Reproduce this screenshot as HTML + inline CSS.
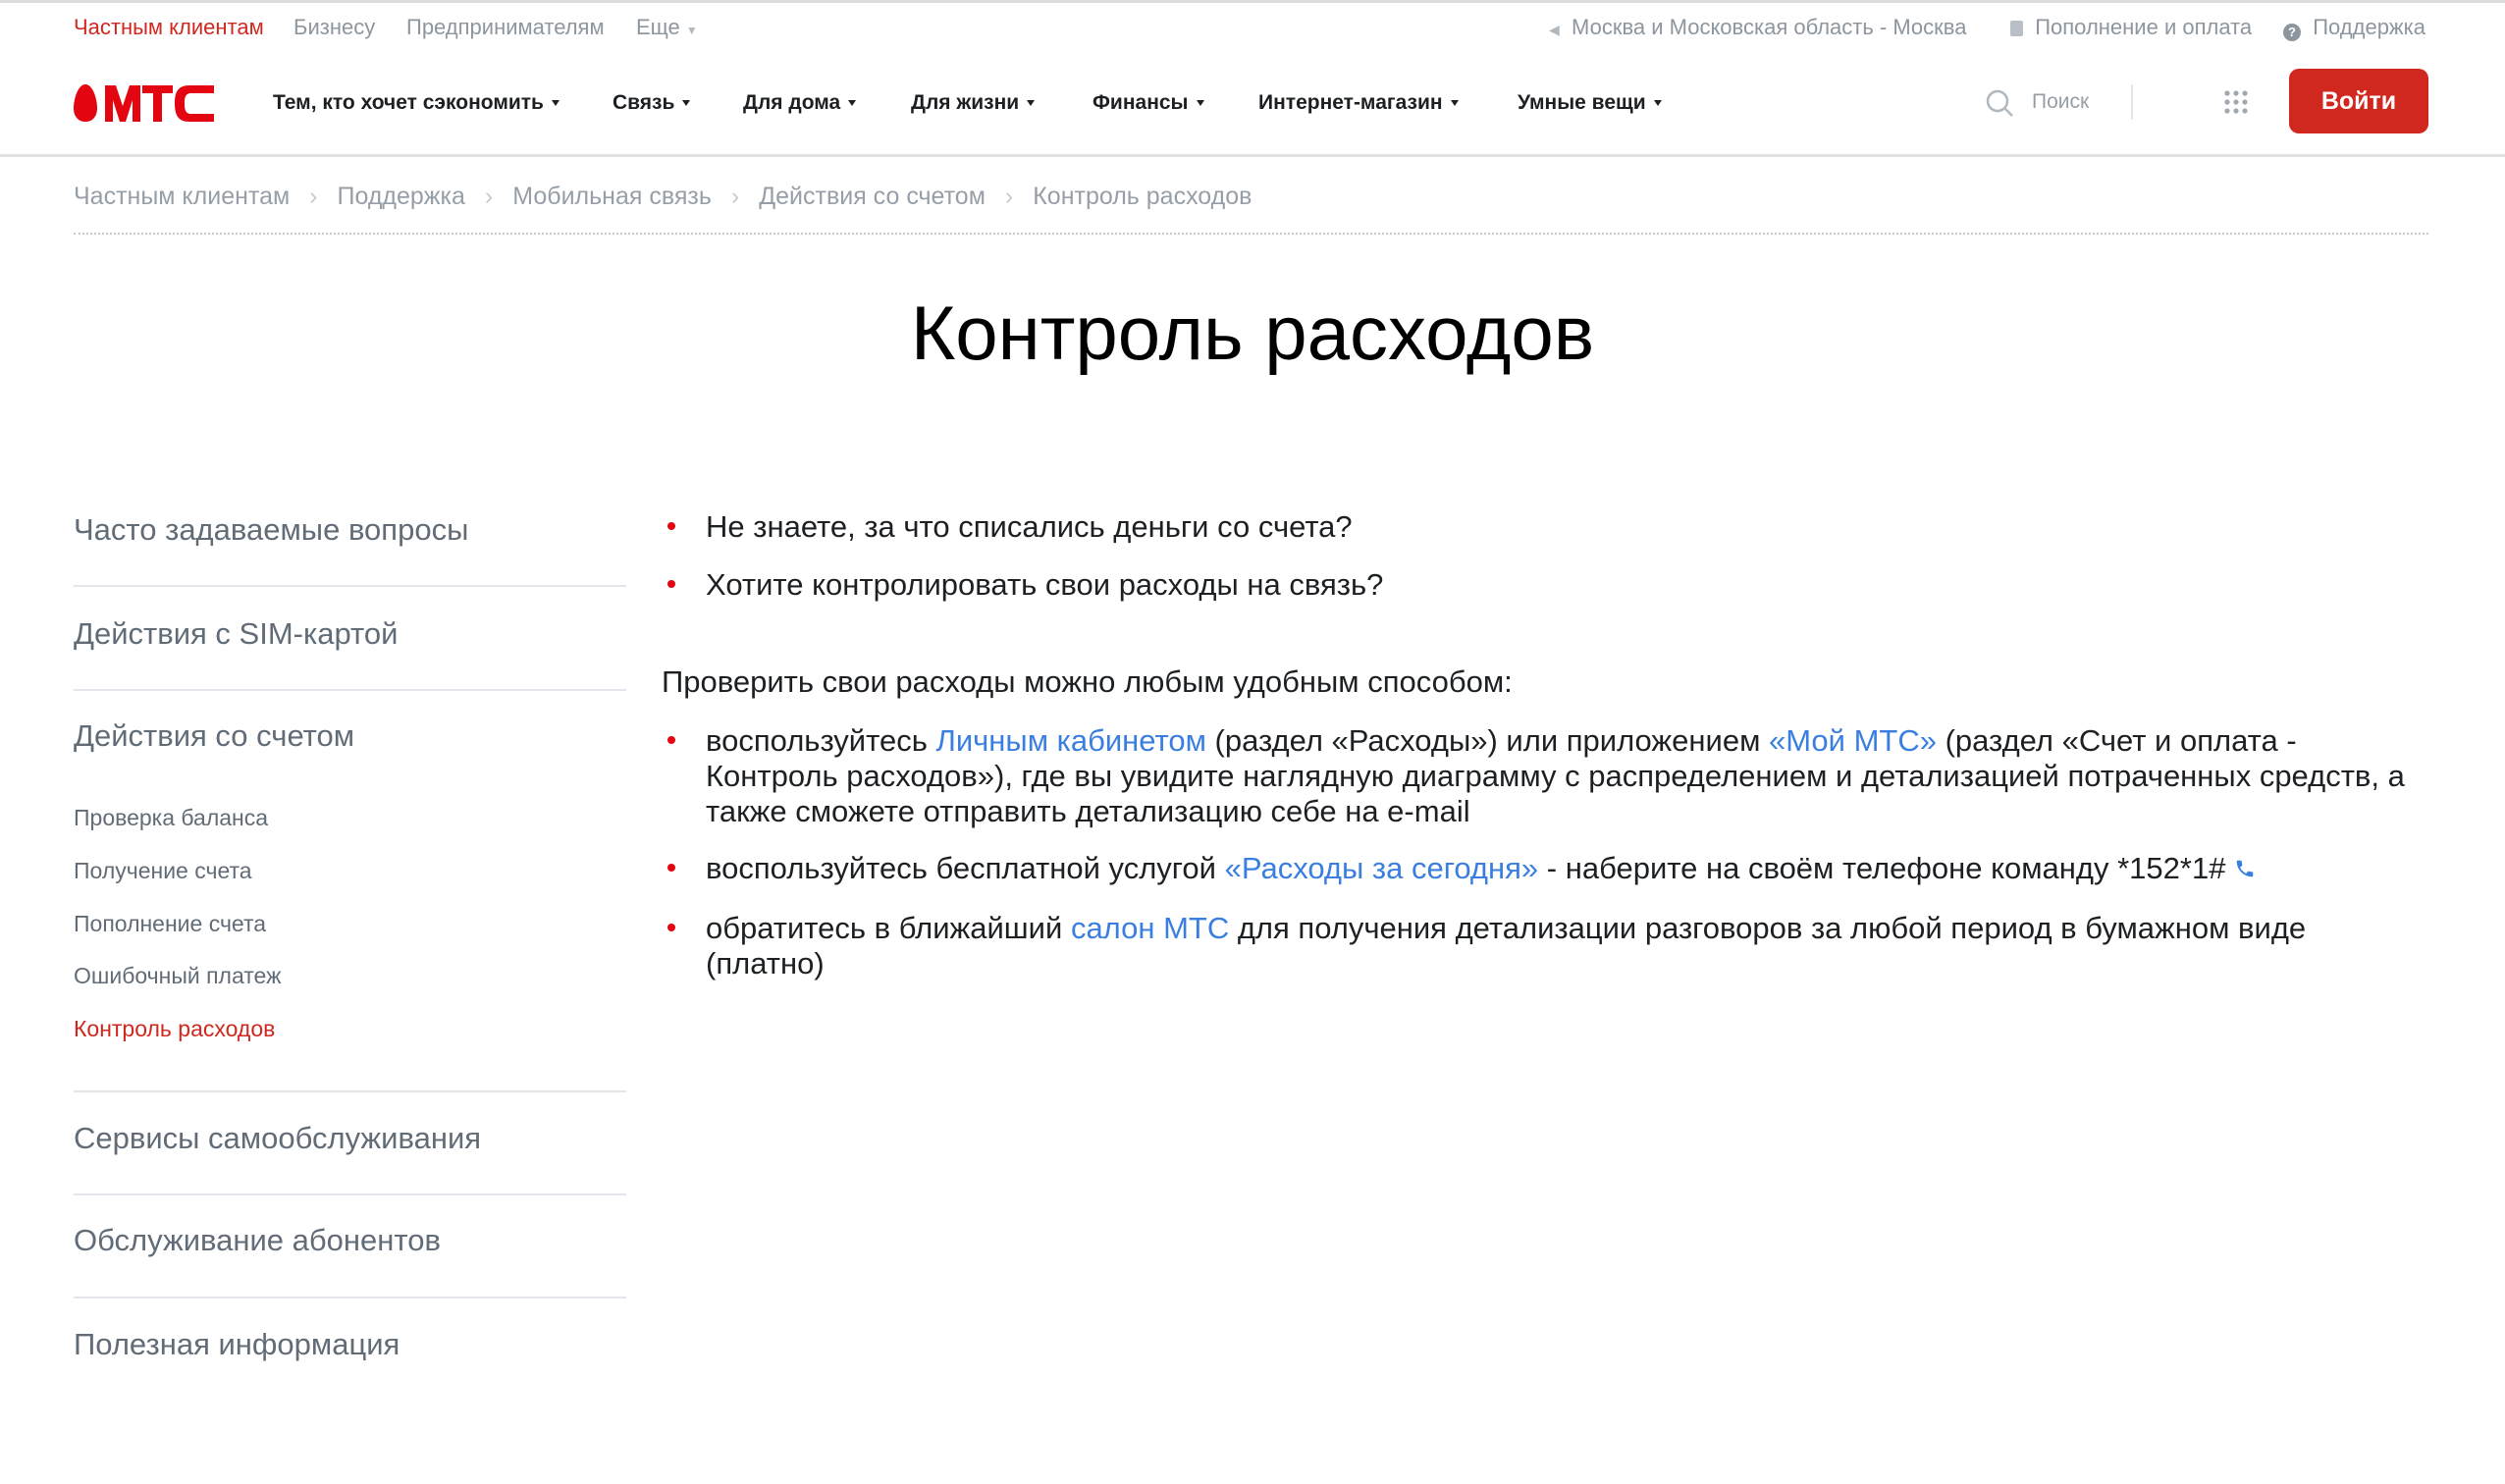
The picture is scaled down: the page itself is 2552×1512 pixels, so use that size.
<!DOCTYPE html>
<html><head><meta charset="utf-8"><style>
*{margin:0;padding:0;box-sizing:border-box}
body{width:2552px;height:1512px;background:#fff;font-family:"Liberation Sans",sans-serif;color:#1d2023;position:relative;overflow:hidden}
.a{position:absolute;white-space:nowrap}
.top{font-size:22px;color:#8d969f;top:15px}
.nav{font-size:21px;font-weight:bold;top:93px;color:#1d2023}
.tri{display:inline-block;width:0;height:0;border-left:4px solid transparent;border-right:4px solid transparent;border-top:6px solid #1d2023;margin-left:8px;vertical-align:3px}
.bc{font-size:25px;color:#969fa8;top:186px}
.sep{color:#c5cbd1;margin:0 20px}
.side{font-size:31px;color:#626c77;left:75px}
.sub{font-size:23px;color:#626c77;left:75px}
.hr{position:absolute;left:75px;width:563px;height:2px;background:#e2e5eb}
.c{font-size:31px;color:#1d2023;left:719px;line-height:36px}
.b{position:absolute;left:680px;width:8px;height:8px;border-radius:50%;background:#e30611}
.l{color:#3a7fe0}
</style></head><body>
<div style="position:absolute;top:0;left:0;width:2552px;height:3px;background:#dcdcdc"></div>
<div class="a top" style="left:75px;color:#d0281f">Частным клиентам</div>
<div class="a top" style="left:299px">Бизнесу</div>
<div class="a top" style="left:414px">Предпринимателям</div>
<div class="a top" style="left:648px">Еще <span style="font-size:12px;color:#b0b8c0">▼</span></div>
<div class="a top" style="left:1578px"><span style="font-size:14px;color:#b0b8c0">◀</span>&nbsp; Москва и Московская область - Москва</div>
<div class="a top" style="left:2048px"><span style="display:inline-block;width:13px;height:16px;background:#b8bfc6;border-radius:2px;vertical-align:-2px"></span>&nbsp; Пополнение и оплата</div>
<div class="a top" style="left:2326px"><span style="display:inline-block;width:18px;height:18px;background:#8d969f;border-radius:50%;color:#fff;font-size:13px;text-align:center;line-height:18px;font-weight:bold;vertical-align:-2px">?</span>&nbsp; Поддержка</div>

<svg class="a" style="left:73px;top:84px" width="148" height="42" viewBox="0 0 148 42">
<path d="M14 2 C22 2 26 18 26 26 C26 35 21 40 14 40 C7 40 2 35 2 26 C2 18 6 2 14 2Z" fill="#e30611"/>
<path d="M34 40 V3 H45 L52 24 L59 3 H70 V40 H62 V18 L55 40 H49 L42 18 V40Z" fill="#e30611"/>
<path d="M72 3 H103 V11 H92 V40 H83 V11 H72Z" fill="#e30611"/>
<path d="M145 11 H122 C116 11 115 15 115 21 C115 28 116 32 122 32 H145 V40 H120 C109 40 105 34 105 21 C105 9 109 3 120 3 H145Z" fill="#e30611"/>
</svg>
<div class="a nav" style="left:278px">Тем, кто хочет сэкономить<span class="tri"></span></div>
<div class="a nav" style="left:624px">Связь<span class="tri"></span></div>
<div class="a nav" style="left:757px">Для дома<span class="tri"></span></div>
<div class="a nav" style="left:928px">Для жизни<span class="tri"></span></div>
<div class="a nav" style="left:1113px">Финансы<span class="tri"></span></div>
<div class="a nav" style="left:1282px">Интернет-магазин<span class="tri"></span></div>
<div class="a nav" style="left:1546px">Умные вещи<span class="tri"></span></div>
<svg class="a" style="left:2022px;top:90px" width="32" height="32"><circle cx="13" cy="13" r="10" fill="none" stroke="#b0b8c0" stroke-width="2.5"/><line x1="20" y1="20" x2="28" y2="28" stroke="#b0b8c0" stroke-width="2.5"/></svg>
<div class="a" style="left:2070px;top:92px;font-size:21px;color:#969fa8">Поиск</div>
<div style="position:absolute;left:2171px;top:86px;width:2px;height:36px;background:#e2e5eb"></div>
<svg class="a" style="left:2266px;top:92px" width="24" height="24" fill="#a0a8b0"><circle cx="3" cy="3" r="2.6"/><circle cx="12" cy="3" r="2.6"/><circle cx="21" cy="3" r="2.6"/><circle cx="3" cy="12" r="2.6"/><circle cx="12" cy="12" r="2.6"/><circle cx="21" cy="12" r="2.6"/><circle cx="3" cy="21" r="2.6"/><circle cx="12" cy="21" r="2.6"/><circle cx="21" cy="21" r="2.6"/></svg>
<div style="position:absolute;left:2332px;top:70px;width:142px;height:66px;background:#d0281f;border-radius:10px;color:#fff;font-size:25px;font-weight:bold;text-align:center;line-height:66px">Войти</div>
<div style="position:absolute;top:157px;left:0;width:2552px;height:3px;background:#e2e2e2"></div>

<div class="a bc" style="left:75px">Частным клиентам<span class="sep">›</span>Поддержка<span class="sep">›</span>Мобильная связь<span class="sep">›</span>Действия со счетом<span class="sep">›</span>Контроль расходов</div>
<div style="position:absolute;left:75px;top:237px;width:2399px;border-top:2px dotted #c5cbd1"></div>

<div class="a" style="left:0;width:2552px;text-align:center;top:294px;font-size:78px;color:#000">Контроль расходов</div>

<div class="a side" style="top:522px">Часто задаваемые вопросы</div>
<div class="hr" style="top:596px"></div>
<div class="a side" style="top:628px">Действия с SIM-картой</div>
<div class="hr" style="top:702px"></div>
<div class="a side" style="top:732px">Действия со счетом</div>
<div class="a sub" style="top:820px">Проверка баланса</div>
<div class="a sub" style="top:874px">Получение счета</div>
<div class="a sub" style="top:928px">Пополнение счета</div>
<div class="a sub" style="top:981px">Ошибочный платеж</div>
<div class="a sub" style="top:1035px;color:#d0281f">Контроль расходов</div>
<div class="hr" style="top:1111px"></div>
<div class="a side" style="top:1142px">Сервисы самообслуживания</div>
<div class="hr" style="top:1216px"></div>
<div class="a side" style="top:1246px">Обслуживание абонентов</div>
<div class="hr" style="top:1321px"></div>
<div class="a side" style="top:1352px">Полезная информация</div>

<div class="b" style="top:532px"></div>
<div class="a c" style="top:519px">Не знаете, за что списались деньги со счета?</div>
<div class="b" style="top:591px"></div>
<div class="a c" style="top:578px">Хотите контролировать свои расходы на связь?</div>
<div class="a c" style="top:677px;left:674px">Проверить свои расходы можно любым удобным способом:</div>
<div class="b" style="top:750px"></div>
<div class="a c" style="top:737px">воспользуйтесь <span class="l">Личным кабинетом</span> (раздел «Расходы») или приложением <span class="l">«Мой МТС»</span> (раздел «Счет и оплата -<br>Контроль расходов»), где вы увидите наглядную диаграмму с распределением и детализацией потраченных средств, а<br>также сможете отправить детализацию себе на e-mail</div>
<div class="b" style="top:880px"></div>
<div class="a c" style="top:867px">воспользуйтесь бесплатной услугой <span class="l">«Расходы за сегодня»</span> - наберите на своём телефоне команду *152*1# <svg width="22" height="22" viewBox="0 0 24 24" style="vertical-align:-1px"><path d="M6.6 10.8c1.4 2.8 3.8 5.1 6.6 6.6l2.2-2.2c.3-.3.7-.4 1-.2 1.1.4 2.3.6 3.6.6.6 0 1 .4 1 1V20c0 .6-.4 1-1 1C10.6 21 3 13.4 3 4c0-.6.4-1 1-1h3.5c.6 0 1 .4 1 1 0 1.3.2 2.5.6 3.6.1.3 0 .7-.2 1z" fill="#3a7fe0"/></svg></div>
<div class="b" style="top:941px"></div>
<div class="a c" style="top:928px">обратитесь в ближайший <span class="l">салон МТС</span> для получения детализации разговоров за любой период в бумажном виде<br>(платно)</div>
</body></html>
